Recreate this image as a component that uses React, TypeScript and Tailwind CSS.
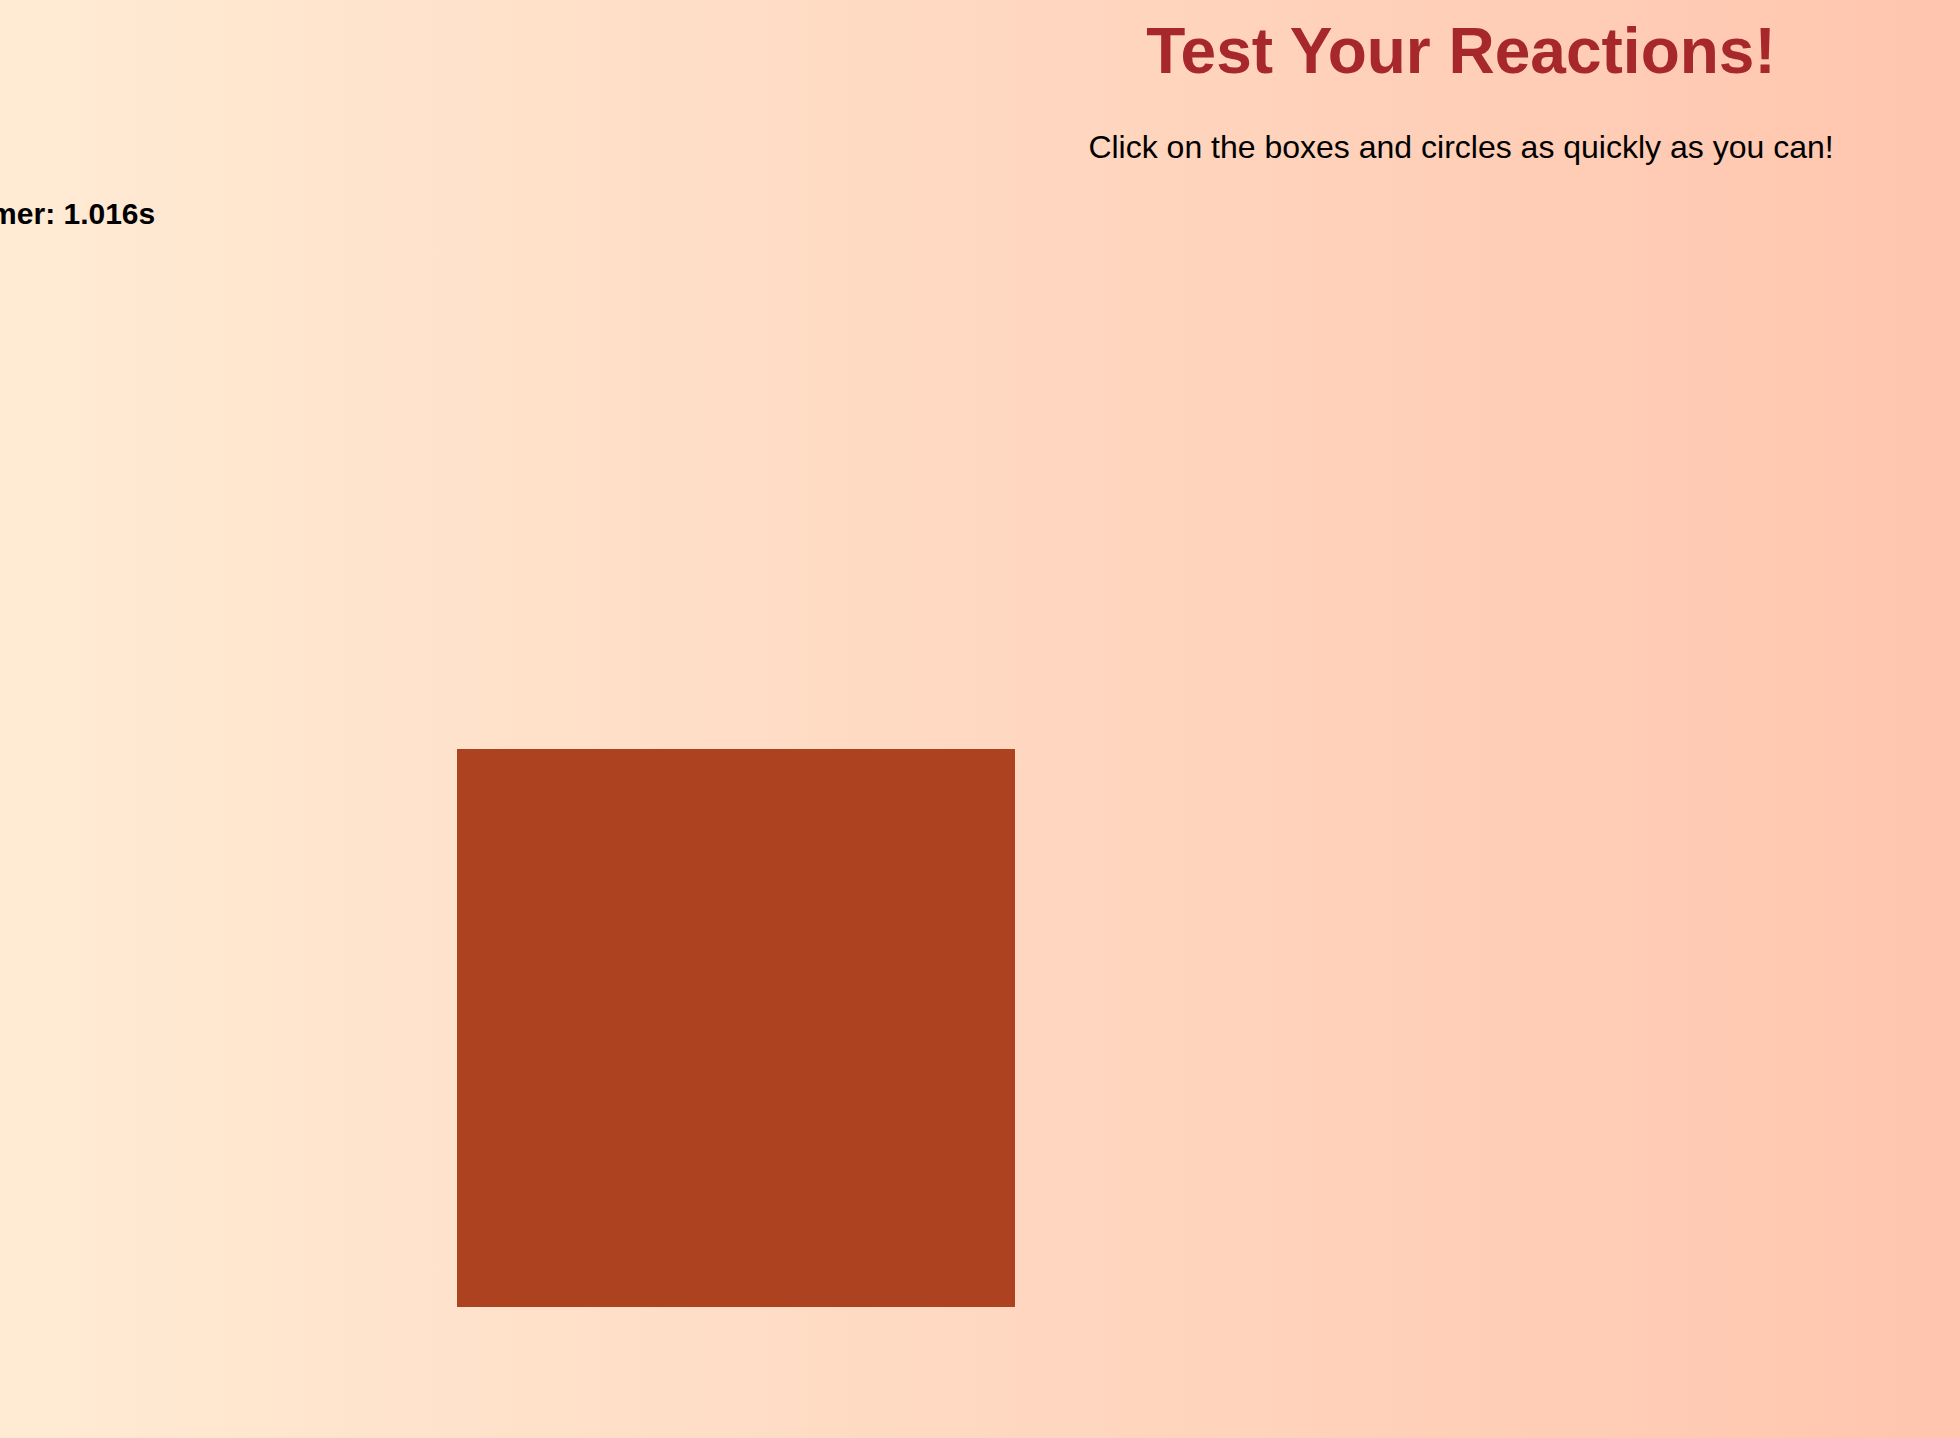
function App() {
  return (
    <div
      className="relative h-screen w-full overflow-hidden bg-gradient-to-r from-[#ffebd4] to-[#ffc5ae] text-black"
      style={{ fontFamily: '"Liberation Sans", Arial, sans-serif' }}
    >
      <div className="flex">
        <div className="w-[962px] shrink-0 pt-[199px]">
          <p className="ml-[-36px] whitespace-nowrap text-[30px] font-bold leading-none">
            Timer: 1.016s
          </p>
        </div>

        <div className="flex-1 pt-[19px] text-center">
          <h1 className="text-[64px] font-bold leading-none text-[#a6282b]">
            Test Your Reactions!
          </h1>
          <p className="mt-[48px] text-[32px] leading-none">
            Click on the boxes and circles as quickly as you can!
          </p>
        </div>
      </div>

      <div className="absolute left-[457px] top-[749px] h-[558px] w-[558px] bg-[#ad4220]"></div>
    </div>
  );
}

export default App;
